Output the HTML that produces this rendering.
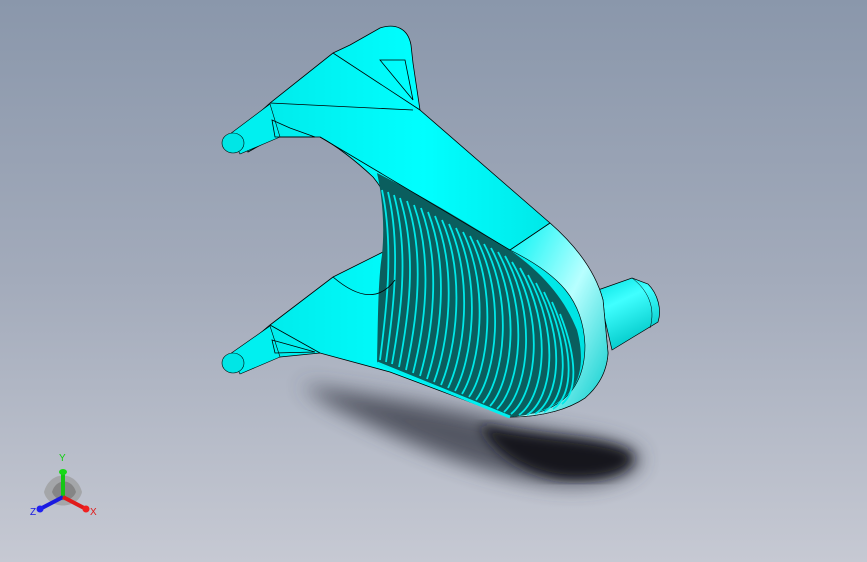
<!DOCTYPE html>
<html><head><style>
html,body{margin:0;padding:0;width:867px;height:562px;overflow:hidden}
body{background:linear-gradient(#8a97ab 0%,#a3abbb 50%,#c6c9d3 100%)}
svg{position:absolute;left:0;top:0}
</style></head><body>
<svg width="867" height="562" viewBox="0 0 867 562" xmlns="http://www.w3.org/2000/svg">
<defs>
<filter id="b" x="-20%" y="-50%" width="140%" height="200%"><feGaussianBlur stdDeviation="10"/></filter>
<filter id="b2"><feGaussianBlur stdDeviation="6"/></filter>
<linearGradient id="cy" x1="0" y1="0" x2="1" y2="0"><stop offset="0" stop-color="#00e8e8"/><stop offset="0.5" stop-color="#00ffff"/><stop offset="1" stop-color="#00dede"/></linearGradient>
<linearGradient id="rim" x1="0" y1="0" x2="1" y2="1"><stop offset="0" stop-color="#00f4f4"/><stop offset="0.5" stop-color="#b8ffff"/><stop offset="1" stop-color="#00caca"/></linearGradient>
<linearGradient id="bs" x1="0" y1="0" x2="0.4" y2="1"><stop offset="0" stop-color="#00e0e0"/><stop offset="0.4" stop-color="#40ffff"/><stop offset="1" stop-color="#00c8c8"/></linearGradient>
</defs>
<path d="M300,385 C380,395 460,410 520,425 C580,435 625,440 640,455 C645,472 610,488 560,485 C480,478 400,440 330,405 Z" fill="#3a3e48" opacity="0.8" filter="url(#b)"/>
<path d="M480,425 C545,440 615,438 632,455 C636,472 600,482 560,478 C525,472 495,455 480,425Z" fill="#16181d" filter="url(#b2)"/>
<!-- right boss -->
<path d="M598,290 L632,278 L648,284 C658,294 662,310 658,322 L612,350 Z" fill="url(#bs)" stroke="#000" stroke-width="0.7"/>
<path d="M632,278 C648,290 656,308 650,328" fill="none" stroke="#000" stroke-width="0.5"/>
<!-- main body -->
<path d="M240,130 L270,103 L333,53 L350,45 L380,28 C395,23 408,28 411,45 L413,63 L420,110 L550,223 C575,245 595,270 603,300 L608,353 C607,370 600,385 585,398 C570,408 545,417 510,417 L390,372 L320,353 L280,357 L248,363 L240,350 L270,325 L333,277 L387,250 C395,250 400,252 400,253 C400,230 392,200 373,177 C355,160 335,145 320,137 L275,137 L248,152 Z" fill="url(#cy)" stroke="#000" stroke-width="0.8"/>
<!-- arms -->
<path d="M230,134 L270,104 L280,137 L240,154 Z" fill="#00f0f0" stroke="#000" stroke-width="0.6"/>
<ellipse cx="233" cy="143" rx="11" ry="10" fill="#00e6e6" stroke="#000" stroke-width="0.6"/>
<path d="M230,354 L270,326 L280,357 L240,374 Z" fill="#00f0f0" stroke="#000" stroke-width="0.6"/>
<ellipse cx="233" cy="363" rx="11" ry="10" fill="#00e6e6" stroke="#000" stroke-width="0.6"/>
<path d="M510,250 L550,223 C575,245 595,270 603,300 L608,353 C607,370 600,385 585,398 C570,408 545,417 510,417 L540,412 C570,402 585,380 585,345 C583,300 560,275 510,250Z" fill="url(#rim)" stroke="#000" stroke-width="0.6"/>
<path d="M377,173 C430,200 470,225 510,250 C545,275 565,300 577,330 C585,360 580,380 570,392 C555,408 535,415 510,417 L377,363 C378,320 378,280 382,255 C385,225 382,195 377,173Z" fill="#0a5e5e"/>
<g fill="none" stroke="#00e8e8" stroke-width="1.8">
<path d="M382,190 C395,250 385,320 380,360"/>
<path d="M388,192 C402,250 392,320 386,362"/>
<path d="M394,195 C410,255 400,320 392,364"/>
<path d="M400,198 C418,255 408,320 399,367"/>
<path d="M407,201 C426,258 416,325 406,370"/>
<path d="M414,205 C434,262 424,330 413,373"/>
<path d="M421,208 C442,265 432,335 420,376"/>
<path d="M428,212 C450,268 440,340 427,379"/>
<path d="M435,216 C458,272 448,345 434,382"/>
<path d="M442,220 C466,276 456,350 441,385"/>
<path d="M449,224 C474,280 464,355 448,388"/>
<path d="M456,228 C482,284 472,360 455,391"/>
<path d="M463,232 C490,288 480,365 462,394"/>
<path d="M470,236 C498,292 488,370 469,397"/>
<path d="M477,240 C506,296 496,374 476,400"/>
<path d="M484,244 C514,300 504,378 483,403"/>
<path d="M491,248 C522,305 512,382 490,406"/>
<path d="M498,252 C530,310 520,386 497,409"/>
<path d="M505,256 C538,315 528,390 504,412"/>
<path d="M512,262 C546,320 536,394 511,414"/>
<path d="M520,268 C553,326 545,396 519,415"/>
<path d="M528,275 C560,333 553,398 527,415"/>
<path d="M536,283 C566,340 560,398 535,414"/>
<path d="M544,292 C571,347 567,398 544,412"/>
<path d="M552,302 C575,354 573,396 553,409"/>
<path d="M560,314 C578,360 577,392 562,404"/>
</g>
<path d="M377,363 L510,417" stroke="#00f0f0" stroke-width="3" fill="none"/>
<g fill="none" stroke="#000" stroke-width="0.8">
<path d="M270,103 L413,110"/>
<path d="M333,53 L420,110"/>
<path d="M320,137 L510,250 L550,223"/>
<path d="M270,325 L320,353"/>
<path d="M333,277 C360,300 380,300 395,280"/>
<path d="M272,120 L290,128 L315,137 L275,137 Z"/>
<path d="M272,340 L290,345 L315,352 L275,353 Z"/>
<path d="M380,60 L405,60 L413,100 Z"/>
</g>
<g>
<path d="M44,492 C50,470 76,470 82,492 C78,510 48,510 44,492Z" fill="#9a9a9a" opacity="0.7"/>
<path d="M52,492 C56,478 72,478 76,492 C72,503 56,503 52,492Z" fill="#777" opacity="0.7"/>
<line x1="63" y1="497" x2="63" y2="473" stroke="#14c614" stroke-width="4"/>
<ellipse cx="63" cy="472" rx="4" ry="3" fill="#18d818"/>
<line x1="63" y1="497" x2="40" y2="509" stroke="#1a1ae0" stroke-width="4"/>
<circle cx="40" cy="509" r="3.5" fill="#2020f0"/>
<line x1="63" y1="497" x2="86" y2="509" stroke="#e01a1a" stroke-width="4"/>
<circle cx="86" cy="509" r="3.5" fill="#f02020"/>
<text x="59" y="461" font-family="Liberation Sans,sans-serif" font-size="10" fill="#10d010">Y</text>
<text x="30" y="515" font-family="Liberation Sans,sans-serif" font-size="10" fill="#1a1ae0">Z</text>
<text x="90" y="515" font-family="Liberation Sans,sans-serif" font-size="10" fill="#e01a1a">X</text>
</g>
</svg>
</body></html>
